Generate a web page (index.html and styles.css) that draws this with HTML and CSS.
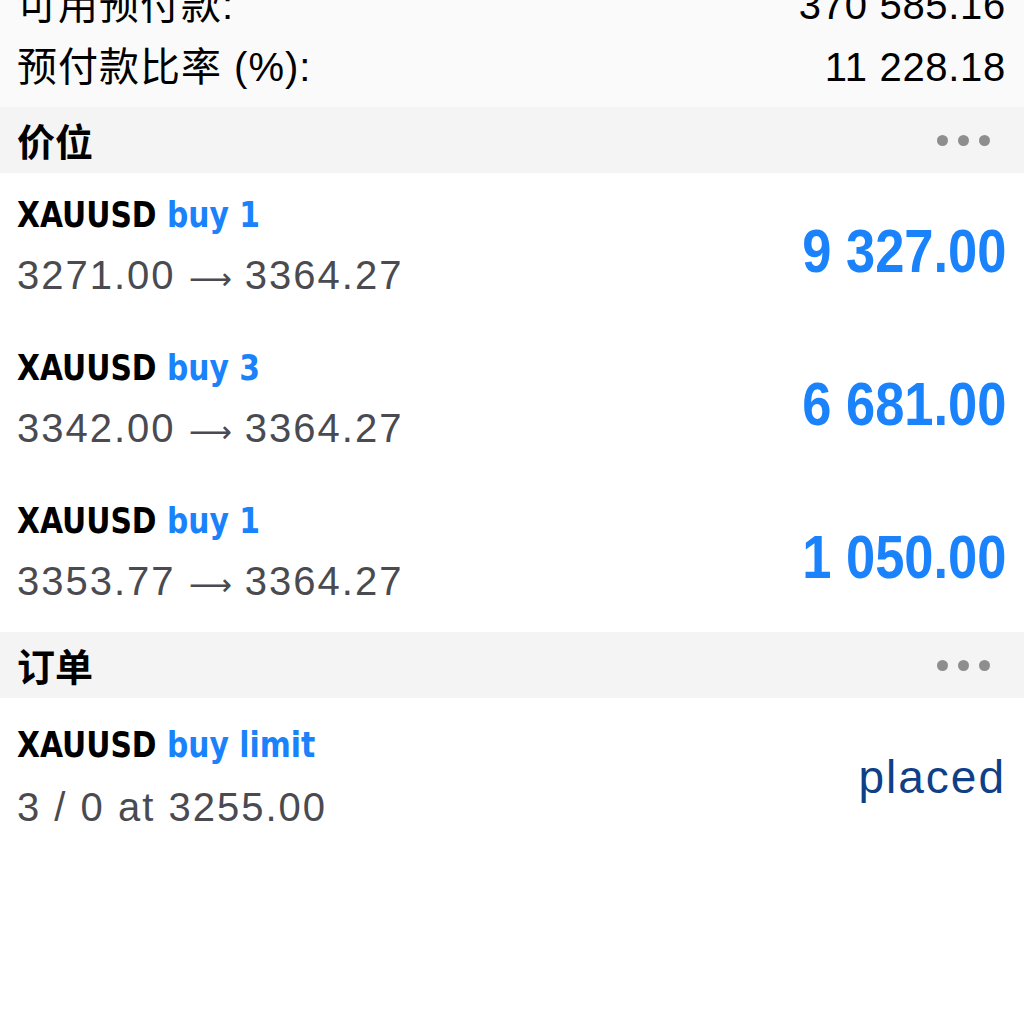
FILE: index.html
```html
<!DOCTYPE html>
<html lang="zh">
<head>
    <meta charset="UTF-8">
    <meta name="viewport" content="width=device-width, initial-scale=1.0">
    <title>交易</title>
    <link rel="stylesheet" href="styles.css">
</head>
<body>
<div id="page">
    <ul class="summary">
        <li class="summary-row">
            <span class="summary-label">可用预付款:</span>
            <span class="summary-value">370 585.16</span>
        </li>
        <li class="summary-row">
            <span class="summary-label">预付款比率 (%):</span>
            <span class="summary-value">11 228.18</span>
        </li>
    </ul>

    <div class="section-head">
        <span class="section-title">价位</span>
        <span class="more"><i></i><i></i><i></i></span>
    </div>
    <ul class="list">
        <li class="trade">
            <div class="trade-info">
                <div class="trade-title">XAUUSD <span class="side">buy 1</span></div>
                <div class="trade-sub">3271.00 <span class="arrow">⟶</span> 3364.27</div>
            </div>
            <div class="profit">9 327.00</div>
        </li>
        <li class="trade">
            <div class="trade-info">
                <div class="trade-title">XAUUSD <span class="side">buy 3</span></div>
                <div class="trade-sub">3342.00 <span class="arrow">⟶</span> 3364.27</div>
            </div>
            <div class="profit">6 681.00</div>
        </li>
        <li class="trade">
            <div class="trade-info">
                <div class="trade-title">XAUUSD <span class="side">buy 1</span></div>
                <div class="trade-sub">3353.77 <span class="arrow">⟶</span> 3364.27</div>
            </div>
            <div class="profit">1 050.00</div>
        </li>
    </ul>

    <div class="section-head">
        <span class="section-title">订单</span>
        <span class="more"><i></i><i></i><i></i></span>
    </div>
    <ul class="list">
        <li class="trade order">
            <div class="trade-info">
                <div class="trade-title">XAUUSD <span class="side">buy limit</span></div>
                <div class="trade-sub">3 / 0 at 3255.00</div>
            </div>
            <div class="state">placed</div>
        </li>
    </ul>
</div>
</body>
</html>
```

FILE: styles.css
```css
body {
    margin: 0;
    background: #fff;
    font-family: "Liberation Sans", "Noto Sans CJK SC", sans-serif;
    color: #000;
}
ul,
li {
    list-style: none;
    margin: 0;
    padding: 0;
}
#page {
    width: 1024px;
    height: 1020px;
    overflow: hidden;
}

/* 顶部账户信息 */
.summary {
    margin-top: -26px;
    padding: 0 18px 9px 17px;
    background: #fafafa;
}
.summary-row {
    display: flex;
    justify-content: space-between;
    height: 62px;
    line-height: 62px;
    font-size: 40px;
}
.summary-label {
    letter-spacing: 1px;
}
.summary-value {
    letter-spacing: 0.7px;
}

/* 分组标题 */
.section-head {
    display: flex;
    align-items: center;
    justify-content: space-between;
    height: 66px;
    padding: 0 34px 0 17px;
    background: #f4f4f4;
}
.section-title {
    font-family: "Noto Sans CJK SC", sans-serif;
    font-weight: 700;
    font-size: 38px;
    line-height: 66px;
}
.more {
    display: flex;
    gap: 10px;
}
.more i {
    width: 11px;
    height: 11px;
    border-radius: 50%;
    background: #8e8e8e;
}

/* 持仓 / 订单 */
.trade {
    display: flex;
    align-items: center;
    justify-content: space-between;
    height: 153px;
    box-sizing: border-box;
    padding: 13px 18px 19px 17px;
}
.trade.order {
    height: 160px;
    padding-top: 17px;
    padding-bottom: 19px;
}
.trade-title {
    font-family: "DejaVu Sans Condensed", "DejaVu Sans", sans-serif;
    font-stretch: condensed;
    font-weight: 700;
    font-size: 36px;
    line-height: 60px;
    white-space: nowrap;
    transform: scaleX(0.92);
    transform-origin: left center;
}
.side {
    color: #1a82fb;
}
.trade-sub {
    font-size: 40px;
    line-height: 61px;
    letter-spacing: 2px;
    color: #4a4a51;
}
.arrow {
    font-family: "DejaVu Sans", sans-serif;
    font-size: 30px;
    letter-spacing: 0;
}
.order .trade-sub {
    line-height: 64px;
}
.profit {
    margin-top: 8px;
    font-weight: 700;
    font-size: 61px;
    line-height: 62px;
    color: #1a82fb;
    white-space: nowrap;
    transform: scaleX(0.86);
    transform-origin: right center;
}
.state {
    font-size: 46px;
    line-height: 46px;
    letter-spacing: 2px;
    color: #0f3f86;
}
```
